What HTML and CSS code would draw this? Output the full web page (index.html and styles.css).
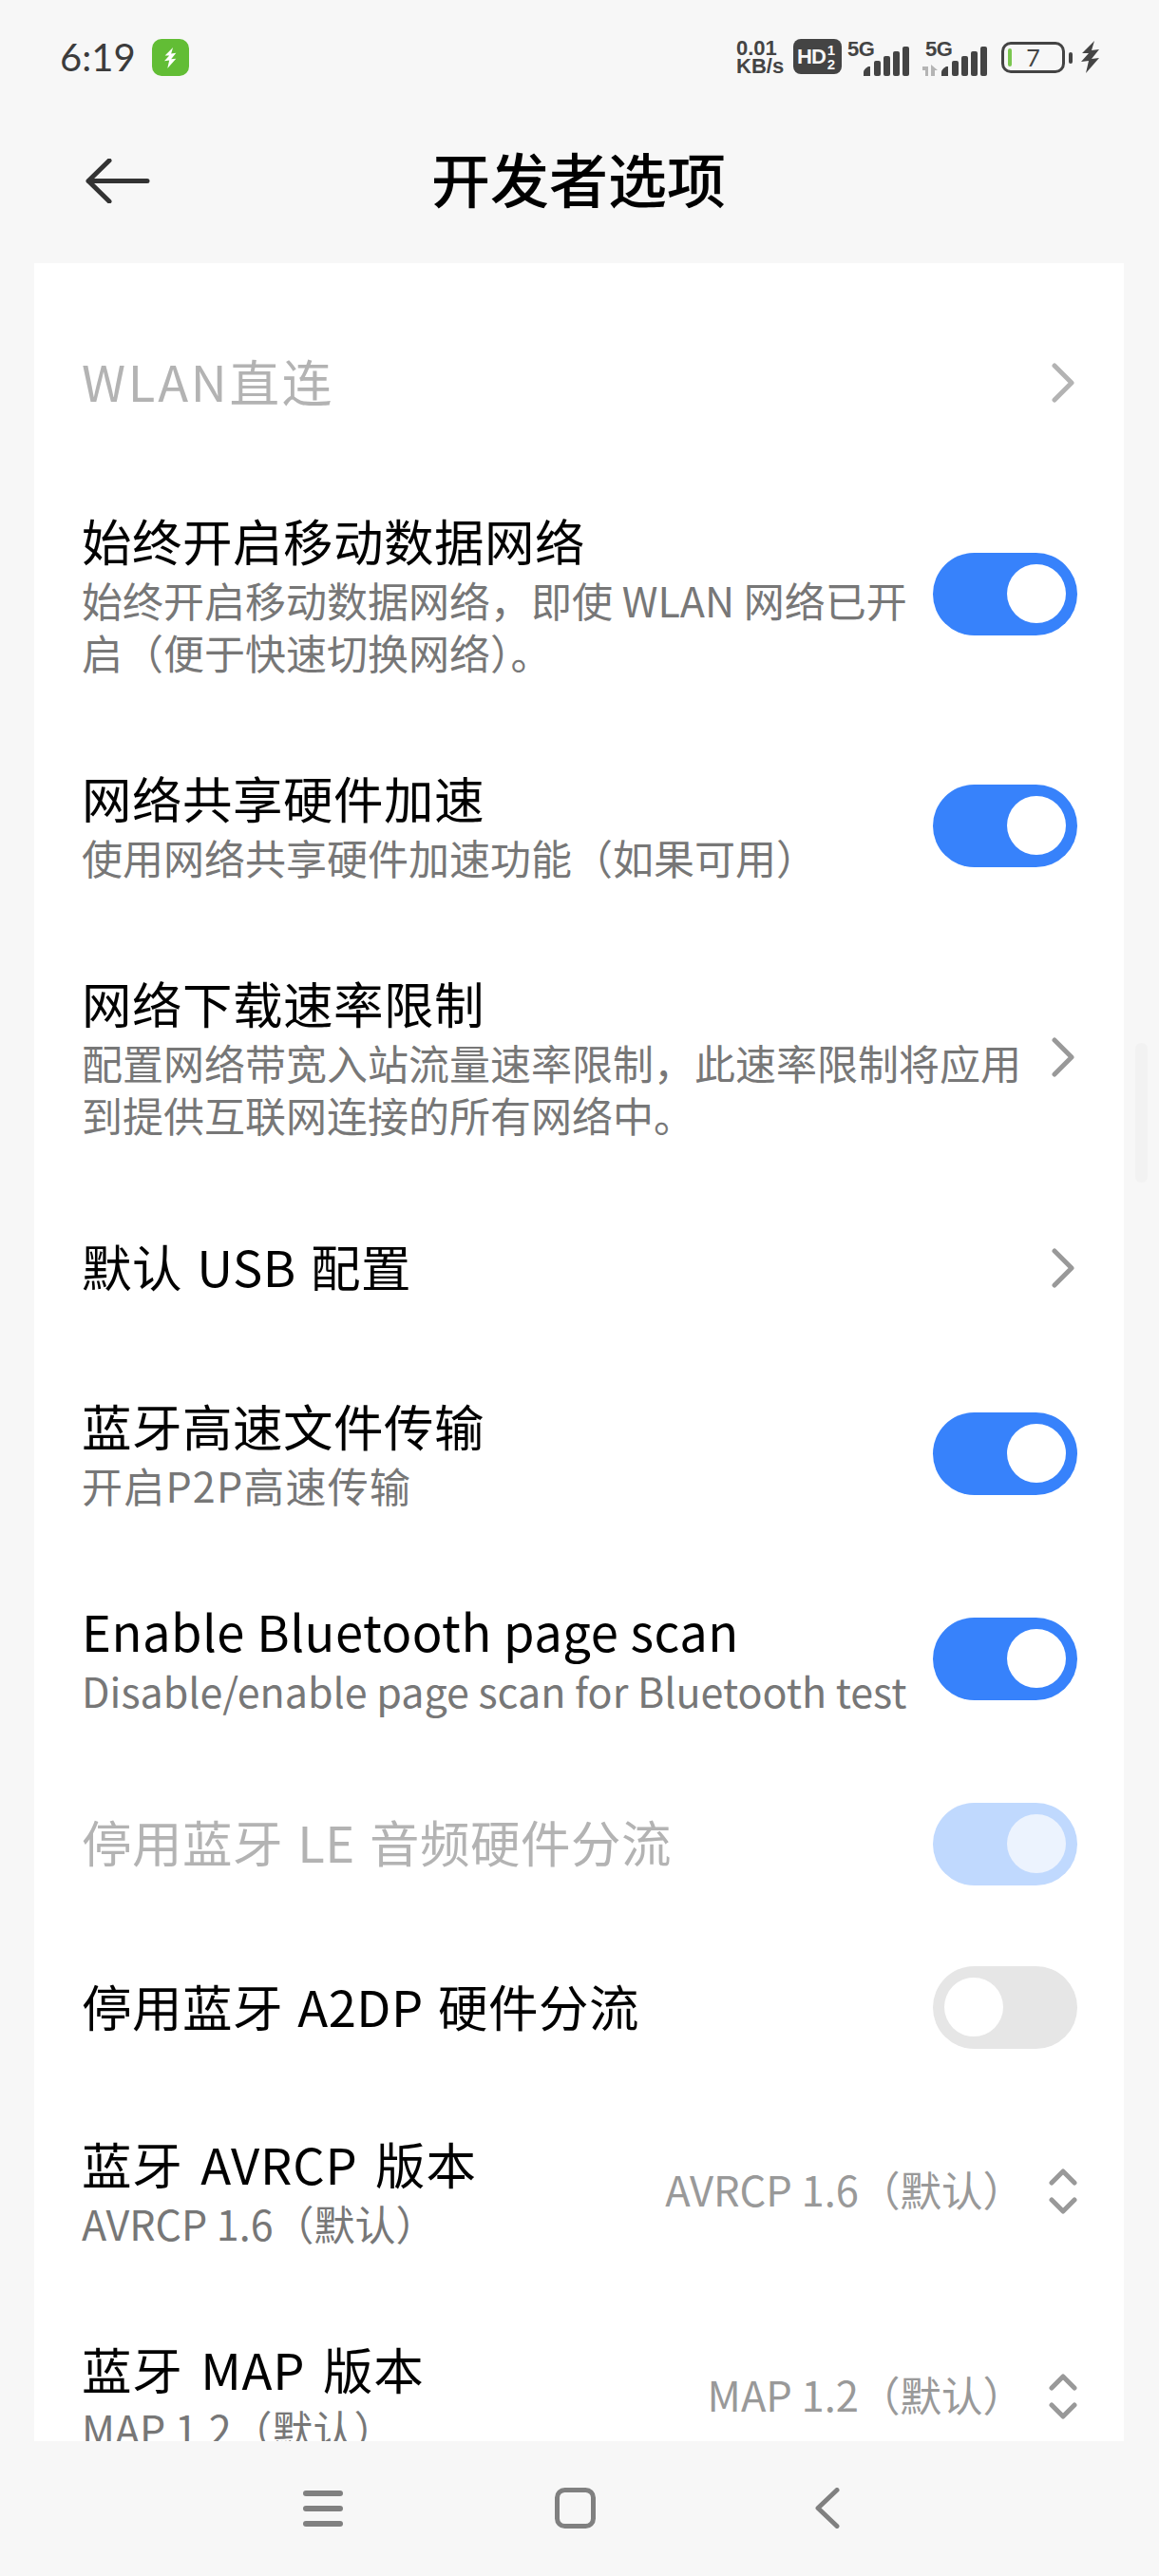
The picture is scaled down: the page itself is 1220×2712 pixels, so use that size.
FILE: index.html
```html
<!DOCTYPE html>
<html lang="zh-CN">
<head>
  <meta charset="UTF-8" />
  <title>开发者选项</title>
  <link rel="stylesheet" href="styles.css">
</head>
<body>
  <div class="status-bar">
    <div class="status-left">
      <span class="clock">6:19</span>
      <span class="charge-app">
        <svg width="13" height="24" viewBox="0 0 20 34"><path d="M14 0 1 13h7L0 22l8-1-3 13 14-16-8 1 8-10-8 1z" fill="#fff"/></svg>
      </span>
    </div>
    <div class="status-right">
      <div class="net-speed"><span>0.01</span><span>KB/s</span></div>
      <div class="hd-badge">
        <span class="hd-text">HD</span>
        <span class="hd-nums"><span>1</span><span>2</span></span>
      </div>
      <div class="signal">
        <span class="five-g">5G</span>
        <svg width="48" height="31" viewBox="0 0 48 31"><g fill="#444"><path d="M0 31v-4q0-3 5-6h2v10z"/><rect x="11" y="15" width="7" height="16" rx="2"/><rect x="21" y="10" width="7" height="21" rx="2"/><rect x="31" y="5" width="7" height="26" rx="2"/><rect x="41" y="0" width="7" height="31" rx="2"/></g></svg>
      </div>
      <div class="signal signal-second">
        <span class="five-g">5G</span>
        <svg class="arrows" width="18" height="12" viewBox="0 0 18 12"><path d="M1 2h6v10H4V6H1zM10 12V0l7 6h-3v6z" fill="#b4b4b4"/></svg>
        <svg width="48" height="31" viewBox="0 0 48 31"><g fill="#444"><path d="M0 31v-4q0-3 5-6h2v10z"/><rect x="11" y="15" width="7" height="16" rx="2"/><rect x="21" y="10" width="7" height="21" rx="2"/><rect x="31" y="5" width="7" height="26" rx="2"/><rect x="41" y="0" width="7" height="31" rx="2"/></g></svg>
      </div>
      <div class="battery">
        <span class="battery-level"></span>
        <span class="battery-num">7</span>
      </div>
      <span class="battery-nub"></span>
      <svg class="bolt" width="20" height="34" viewBox="0 0 20 34"><path d="M14 0 1 13h7L0 22l8-1-3 13 14-16-8 1 8-10-8 1z" fill="#444"/></svg>
    </div>
  </div>

  <div class="title-bar">
    <svg class="back-arrow" width="68" height="47" viewBox="0 0 68 47"><path d="M25 2 3 23.500 25 45M3 23.500h62" fill="none" stroke="#333" stroke-width="5" stroke-linecap="round" stroke-linejoin="round"/></svg>
    <h1>开发者选项</h1>
  </div>

  <div class="card">
    <div class="list">
      <div class="row row-single">
        <div class="row-text disabled"><div class="row-title wide">WLAN直连</div></div>
        <svg class="chevron" width="24" height="42" viewBox="0 0 24 42"><path d="M3 3l18 18L3 39" fill="none" stroke="#b3b3b3" stroke-width="5" stroke-linecap="round" stroke-linejoin="round"/></svg>
      </div>

      <div class="row row-triple">
        <div class="row-text">
          <div class="row-title">始终开启移动数据网络</div>
          <div class="row-sub">始终开启移动数据网络，即使 WLAN 网络已开<br>启（便于快速切换网络）。</div>
        </div>
        <span class="switch on"><span class="knob"></span></span>
      </div>

      <div class="row row-double">
        <div class="row-text">
          <div class="row-title">网络共享硬件加速</div>
          <div class="row-sub">使用网络共享硬件加速功能（如果可用）</div>
        </div>
        <span class="switch on"><span class="knob"></span></span>
      </div>

      <div class="row row-triple">
        <div class="row-text">
          <div class="row-title">网络下载速率限制</div>
          <div class="row-sub">配置网络带宽入站流量速率限制，此速率限制将应用<br>到提供互联网连接的所有网络中。</div>
        </div>
        <svg class="chevron" width="24" height="42" viewBox="0 0 24 42"><path d="M3 3l18 18L3 39" fill="none" stroke="#999" stroke-width="5" stroke-linecap="round" stroke-linejoin="round"/></svg>
      </div>

      <div class="row row-single">
        <div class="row-text"><div class="row-title">默认 USB 配置</div></div>
        <svg class="chevron" width="24" height="42" viewBox="0 0 24 42"><path d="M3 3l18 18L3 39" fill="none" stroke="#999" stroke-width="5" stroke-linecap="round" stroke-linejoin="round"/></svg>
      </div>

      <div class="row row-double">
        <div class="row-text">
          <div class="row-title">蓝牙高速文件传输</div>
          <div class="row-sub wide-sub">开启P2P高速传输</div>
        </div>
        <span class="switch on"><span class="knob"></span></span>
      </div>

      <div class="row row-double">
        <div class="row-text">
          <div class="row-title latin">Enable Bluetooth page scan</div>
          <div class="row-sub">Disable/enable page scan for Bluetooth test</div>
        </div>
        <span class="switch on"><span class="knob"></span></span>
      </div>

      <div class="row row-single">
        <div class="row-text disabled"><div class="row-title">停用蓝牙 LE 音频硬件分流</div></div>
        <span class="switch on off-limits"><span class="knob"></span></span>
      </div>

      <div class="row row-single row-short">
        <div class="row-text"><div class="row-title">停用蓝牙 A2DP 硬件分流</div></div>
        <span class="switch"><span class="knob"></span></span>
      </div>

      <div class="row row-double">
        <div class="row-text">
          <div class="row-title long-words">蓝牙 AVRCP 版本</div>
          <div class="row-sub">AVRCP 1.6（默认）</div>
        </div>
        <span class="row-value">AVRCP 1.6（默认）</span>
        <svg class="updown" width="30" height="50" viewBox="0 0 30 50"><path d="M3 16 15 4l12 12M3 34l12 12 12-12" fill="none" stroke="#999" stroke-width="5" stroke-linecap="round" stroke-linejoin="round"/></svg>
      </div>

      <div class="row row-double">
        <div class="row-text">
          <div class="row-title long-words">蓝牙 MAP 版本</div>
          <div class="row-sub">MAP 1.2（默认）</div>
        </div>
        <span class="row-value">MAP 1.2（默认）</span>
        <svg class="updown" width="30" height="50" viewBox="0 0 30 50"><path d="M3 16 15 4l12 12M3 34l12 12 12-12" fill="none" stroke="#999" stroke-width="5" stroke-linecap="round" stroke-linejoin="round"/></svg>
      </div>
    </div>
  </div>

  <div class="scroll-thumb"></div>

  <div class="nav-bar">
    <svg width="42" height="38" viewBox="0 0 42 38"><g fill="#808080"><rect width="42" height="6" rx="3"/><rect y="16" width="42" height="6" rx="3"/><rect y="32" width="42" height="6" rx="3"/></g></svg>
    <svg width="43" height="43" viewBox="0 0 43 43"><rect x="2.500" y="2.500" width="38" height="38" rx="8" fill="none" stroke="#808080" stroke-width="5"/></svg>
    <svg width="27" height="43" viewBox="0 0 27 43"><path d="M24 2.500 4 21.500l20 19" fill="none" stroke="#808080" stroke-width="5" stroke-linecap="round" stroke-linejoin="round"/></svg>
  </div>
</body>
</html>
```

FILE: styles.css
```css
* { box-sizing: border-box; }

body {
  margin: 0;
  width: 1220px;
  height: 2712px;
  overflow: hidden;
  position: relative;
  display: flex;
  flex-direction: column;
  background: #f7f7f7;
  font-family: "Noto Sans CJK SC", "Noto Sans", sans-serif;
  color: #000;
}

.status-bar {
  height: 120px;
  padding: 41px 62px 0 63px;
  display: flex;
  justify-content: space-between;
  align-items: flex-start;
  color: #444;
}

.status-left {
  display: flex;
  align-items: center;
  gap: 17px;
}

.clock {
  font-family: Lato, sans-serif;
  font-size: 40px;
  line-height: 39px;
  color: #3c3c3c;
}

.charge-app {
  width: 39px;
  height: 39px;
  background: #62bd35;
  border-radius: 10px;
  display: flex;
  align-items: center;
  justify-content: center;
}

.status-right {
  display: flex;
  align-items: flex-start;
  font-family: "Liberation Sans", sans-serif;
  font-weight: 700;
}

.net-speed {
  display: flex;
  flex-direction: column;
  width: 60px;
  font-size: 22px;
  line-height: 19px;
}

.hd-badge {
  width: 51px;
  height: 37px;
  background: #444;
  border-radius: 8px;
  color: #f7f7f7;
  display: flex;
  align-items: center;
  padding-left: 4px;
  font-size: 22px;
}

.hd-text { letter-spacing: -1px; }

.hd-nums {
  display: flex;
  flex-direction: column;
  font-size: 15px;
  line-height: 15px;
  margin-left: 2px;
}

.signal {
  position: relative;
  width: 65px;
  height: 35px;
  margin-left: 6px;
  margin-top: 4px;
  display: flex;
  justify-content: flex-end;
  align-items: flex-end;
}

.signal-second {
  width: 69px;
  margin-left: 13px;
}

.five-g {
  position: absolute;
  top: -3px;
  left: 0;
  font-size: 22px;
  line-height: 20px;
  letter-spacing: -0.5px;
}

.signal-second .five-g { left: 4px; }

.arrows {
  position: absolute;
  left: 0;
  bottom: 0;
}

.battery {
  width: 67px;
  height: 33px;
  margin-left: 15px;
  margin-top: 3px;
  border: 3px solid #444;
  border-radius: 10px;
  display: flex;
  align-items: center;
  justify-content: center;
  position: relative;
}

.battery-level {
  position: absolute;
  left: 4px;
  top: 4px;
  width: 4px;
  height: 19px;
  border-radius: 2px;
  background: #7ac64f;
}

.battery-num {
  font-family: Lato, sans-serif;
  font-weight: 400;
  font-size: 25px;
  line-height: 27px;
}

.battery-nub {
  width: 4px;
  height: 12px;
  margin: 14px 0 0 4px;
  background: #444;
  border-radius: 2px;
}

.bolt {
  margin: 2px 0 0 9px;
}

.title-bar {
  position: relative;
  height: 157px;
  display: flex;
  align-items: center;
  justify-content: center;
}

.title-bar h1 {
  margin: 0 0 0 -2px;
  font-size: 62px;
  font-weight: 500;
  line-height: 80px;
  position: relative;
  top: -12px;
}

.back-arrow {
  position: absolute;
  left: 90px;
  top: 47px;
}

.card {
  flex: 1;
  margin: 0 37px 0 36px;
  background: #fff;
  overflow: hidden;
  padding-top: 39px;
}

.row {
  display: flex;
  align-items: center;
  padding: 0 49px 0 50px;
}

.row-single { height: 174px; }
.row-double { height: 216px; }
.row-triple { height: 271px; }
.row-short { height: 171px; }

.row-text {
  flex: 1;
  min-width: 0;
}

.row-title {
  font-size: 52.500px;
  line-height: 60px;
  padding-bottom: 6px;
  letter-spacing: 0.500px;
  word-spacing: 3px;
  white-space: nowrap;
}

.row-title.wide { letter-spacing: 2.700px; }
.row-title.latin { word-spacing: 0; }
.row-title.long-words { word-spacing: 6px; letter-spacing: 0.800px; }

.row-sub {
  font-size: 43px;
  line-height: 55px;
  color: #777;
  white-space: nowrap;
}

.row-sub.wide-sub { letter-spacing: 1.200px; }

.disabled .row-title { color: #b3b3b3; }

.switch {
  flex: none;
  width: 152px;
  height: 87px;
  padding: 12px;
  border-radius: 44px;
  background: #e6e6e6;
  display: flex;
}

.knob {
  width: 62px;
  height: 62px;
  border-radius: 50%;
  background: #fff;
}

.switch.on {
  background: #3782fb;
  justify-content: flex-end;
}

.switch.off-limits { background: #c0d9fe; }
.switch.off-limits .knob { background: #ecf3fe; }

.chevron {
  flex: none;
  margin-right: 3px;
}

.row-value {
  flex: none;
  margin-right: 26px;
  padding-bottom: 5px;
  font-size: 43.500px;
  color: #999;
  white-space: nowrap;
}

.updown { flex: none; }

.scroll-thumb {
  position: absolute;
  left: 1195px;
  top: 1098px;
  width: 13px;
  height: 147px;
  border-radius: 6px;
  background: #f2f2f2;
}

.nav-bar {
  height: 142px;
  padding: 49px 0 0 319px;
  display: flex;
  align-items: flex-start;
}

.nav-bar svg:nth-child(1) { margin-top: 3px; }
.nav-bar svg:nth-child(2) { margin-left: 223px; }
.nav-bar svg:nth-child(3) { margin-left: 230px; }
```
